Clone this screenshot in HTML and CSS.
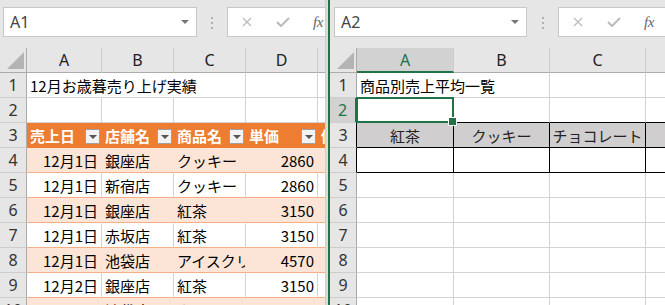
FILE: index.html
```html
<!DOCTYPE html>
<html lang="ja">
<head>
<meta charset="utf-8">
<link rel="stylesheet" href="styles.css">
</head>
<body>
<div class="app">
  <section class="pane pane-left">
    <div class="toolbar">
      <div class="namebox nb-left"><span>A1</span><i class="caret"></i></div>
      <div class="dots"><i></i><i></i><i></i></div>
      <div class="fbox">
        <svg class="ic-x" width="10" height="10" viewBox="0 0 10 10"><path d="M1 1L9 9M9 1L1 9" stroke="#bdbdbd" stroke-width="1.4" fill="none"/></svg>
        <svg class="ic-ok" width="14" height="10" viewBox="0 0 14 10"><path d="M1 5L5 9L13 1" stroke="#bdbdbd" stroke-width="2.2" fill="none"/></svg>
        <span class="fx">fx</span>
      </div>
    </div>
    <div class="sheet sheet-l">
      <div class="corner"><svg width="26" height="24" viewBox="0 0 26 24"><polygon points="24,4 24,21 7,21" fill="#b4b4b4"/></svg></div>
      <div class="ch">A</div><div class="ch">B</div><div class="ch">C</div><div class="ch">D</div><div class="ch">E</div>

      <div class="rh">1</div><div class="c span3">12月お歳暮売り上げ実績</div><div class="c"></div><div class="c"></div>
      <div class="rh">2</div><div class="c"></div><div class="c"></div><div class="c"></div><div class="c"></div><div class="c"></div>
      <div class="rh">3</div>
      <div class="c th">売上日<i class="fbtn"></i></div>
      <div class="c th">店舗名<i class="fbtn"></i></div>
      <div class="c th">商品名<i class="fbtn"></i></div>
      <div class="c th">単価<i class="fbtn"></i></div>
      <div class="c th">個数<i class="fbtn"></i></div>

      <div class="rh">4</div><div class="c band num">12月1日</div><div class="c band">銀座店</div><div class="c band">クッキー</div><div class="c band num">2860</div><div class="c band"></div>
      <div class="rh">5</div><div class="c wr num">12月1日</div><div class="c wr">新宿店</div><div class="c wr">クッキー</div><div class="c wr num">2860</div><div class="c wr"></div>
      <div class="rh">6</div><div class="c band num">12月1日</div><div class="c band">銀座店</div><div class="c band">紅茶</div><div class="c band num">3150</div><div class="c band"></div>
      <div class="rh">7</div><div class="c wr num">12月1日</div><div class="c wr">赤坂店</div><div class="c wr">紅茶</div><div class="c wr num">3150</div><div class="c wr"></div>
      <div class="rh">8</div><div class="c band num">12月1日</div><div class="c band">池袋店</div><div class="c band">アイスクリーム</div><div class="c band num">4570</div><div class="c band"></div>
      <div class="rh">9</div><div class="c wr num">12月2日</div><div class="c wr">銀座店</div><div class="c wr">紅茶</div><div class="c wr num">3150</div><div class="c wr"></div>
      <div class="rh">10</div><div class="c band num">12月2日</div><div class="c band">池袋店</div><div class="c band">クッキー</div><div class="c band num">2860</div><div class="c band"></div>
    </div>
  </section>
  <div class="split"></div>
  <section class="pane pane-right">
    <div class="toolbar">
      <div class="namebox nb-right"><span>A2</span><i class="caret"></i></div>
      <div class="dots dots-r"><i></i><i></i><i></i></div>
      <div class="fbox">
        <svg class="ic-x" width="10" height="10" viewBox="0 0 10 10"><path d="M1 1L9 9M9 1L1 9" stroke="#bdbdbd" stroke-width="1.4" fill="none"/></svg>
        <svg class="ic-ok" width="14" height="10" viewBox="0 0 14 10"><path d="M1 5L5 9L13 1" stroke="#bdbdbd" stroke-width="2.2" fill="none"/></svg>
        <span class="fx">fx</span>
      </div>
    </div>
    <div class="sheet sheet-r">
      <div class="corner"><svg width="26" height="24" viewBox="0 0 26 24"><polygon points="24,4 24,21 7,21" fill="#b4b4b4"/></svg></div>
      <div class="ch on">A</div><div class="ch">B</div><div class="ch">C</div><div class="ch">D</div>

      <div class="rh">1</div><div class="c span2">商品別売上平均一覧</div><div class="c"></div><div class="c"></div>
      <div class="rh on">2</div><div class="c sel"></div><div class="c bk-b"></div><div class="c bk-b"></div><div class="c bk-b"></div>
      <div class="rh bk-r">3</div><div class="c gray center bk-b bk-r">紅茶</div><div class="c gray center bk-b bk-r">クッキー</div><div class="c gray center bk-b bk-r">チョコレート</div><div class="c gray bk-b"></div>
      <div class="rh bk-r">4</div><div class="c bk-b bk-r"></div><div class="c bk-b bk-r"></div><div class="c bk-b bk-r"></div><div class="c bk-b"></div>
      <div class="rh">5</div><div class="c"></div><div class="c"></div><div class="c"></div><div class="c"></div>
      <div class="rh">6</div><div class="c"></div><div class="c"></div><div class="c"></div><div class="c"></div>
      <div class="rh">7</div><div class="c"></div><div class="c"></div><div class="c"></div><div class="c"></div>
      <div class="rh">8</div><div class="c"></div><div class="c"></div><div class="c"></div><div class="c"></div>
      <div class="rh">9</div><div class="c"></div><div class="c"></div><div class="c"></div><div class="c"></div>
      <div class="rh">10</div><div class="c"></div><div class="c"></div><div class="c"></div><div class="c"></div>
    </div>
  </section>
</div>
</body>
</html>
```

FILE: styles.css
```css
* { box-sizing: border-box; margin: 0; padding: 0; }
html, body { width: 665px; height: 305px; overflow: hidden; background: #e6e6e6; }
body { font-family: "Noto Sans CJK JP", sans-serif; }

.app { display: flex; height: 305px; }
.pane { overflow: hidden; background: #fff; display: flex; flex-direction: column; }
.pane-left { width: 325px; flex: none; }
.pane-right { flex: 1; min-width: 0; }
.split { width: 5px; flex: none; background: linear-gradient(to right, #cacaca, #dddddd 60%); border-right: 2px solid #217346; }

.toolbar { height: 48px; flex: none; background: #e6e6e6; display: flex; align-items: flex-start; padding-top: 7px; }
.namebox { height: 30px; background: #fff; border: 1px solid #c8c8c8; display: flex; align-items: center; padding-left: 6px; font-family: "Noto Sans", sans-serif; font-size: 16px; color: #444; }
.nb-left { margin-left: 3px; width: 194px; }
.nb-right { margin-left: 4px; width: 193px; }
.caret { margin-left: auto; margin-right: 7px; width: 0; height: 0; border-left: 4px solid transparent; border-right: 4px solid transparent; border-top: 4px solid #777; }
.dots { width: 30px; flex: none; display: flex; flex-direction: column; align-items: center; gap: 3px; padding-top: 10px; }
.dots-r { width: 31px; }
.dots i { display: block; width: 2px; height: 2px; background: #b0b0b0; }
.fbox { flex: 1; height: 30px; background: #fff; border: 1px solid #c8c8c8; border-right: none; display: flex; align-items: center; }
.ic-x { margin-left: 14px; flex: none; }
.ic-ok { margin-left: 24px; flex: none; }
.fx { margin-left: 23px; font-family: "Liberation Serif", serif; font-style: italic; font-size: 15px; color: #666; letter-spacing: -0.5px; }

.sheet { display: grid; width: max-content; grid-auto-rows: 25px; }
.sheet-l { grid-template-columns: 27px 75px 72px 72px 72px 72px; }
.sheet-r { grid-template-columns: 27px 97px 96px 96px 96px; }

.corner { background: #e6e6e6; border-right: 1px solid #ababab; border-bottom: 1px solid #ababab; }
.corner svg { display: block; }
.ch { background: #e6e6e6; border-right: 1px solid #cdcdcd; border-bottom: 1px solid #ababab; display: flex; align-items: center; justify-content: center; font-family: "Noto Sans", sans-serif; font-size: 16px; color: #222; }
.ch.on { background: #d2d2d2; color: #217346; border-bottom: 2px solid #217346; }
.rh { background: #e6e6e6; border-right: 1px solid #ababab; border-bottom: 1px solid #cdcdcd; display: flex; align-items: center; justify-content: center; font-family: "Noto Sans", sans-serif; font-size: 16px; color: #333; }
.rh.on { background: #d2d2d2; color: #217346; border-right: 2px solid #217346; }
.rh.bk-r { border-right-color: #000; }

.c { border-right: 1px solid #d4d4d4; border-bottom: 1px solid #d4d4d4; display: flex; align-items: center; padding: 0 3px; white-space: nowrap; overflow: hidden; font-size: 15px; line-height: 1; color: #000; }
.span3 { grid-column: span 3; }
.span2 { grid-column: span 2; }
.num { justify-content: flex-end; }
.center { justify-content: center; }

.th { background: #ed7d31; color: #fff; font-weight: bold; border-right-color: #ed7d31; border-bottom-color: #ed7d31; padding: 0 1px 0 3px; }
.fbtn { margin-left: auto; align-self: flex-end; margin-bottom: 3px; width: 15px; height: 15px; flex: none; background: #f3f3f3; border: 1px solid #a0a0a0; display: flex; align-items: center; justify-content: center; }
.fbtn::after { content: ""; width: 0; height: 0; border-left: 4px solid transparent; border-right: 4px solid transparent; border-top: 4px solid #555; }
.band { background: #fce4d6; border-right-color: #fce4d6; border-bottom-color: #f4b084; }
.wr { border-bottom-color: #f4b084; }

.gray { background: #d0cece; color: #222; }
.bk-b { border-bottom-color: #000; }
.bk-r { border-right-color: #000; }
.sel { position: relative; overflow: visible; }
.sel::before { content: ""; position: absolute; z-index: 1; top: -1px; left: -1px; right: -1px; bottom: -1px; border: 2px solid #217346; }
.sel::after { content: ""; position: absolute; z-index: 2; right: -4px; bottom: -4px; width: 7px; height: 7px; background: #217346; border: 1px solid #fff; }
```
